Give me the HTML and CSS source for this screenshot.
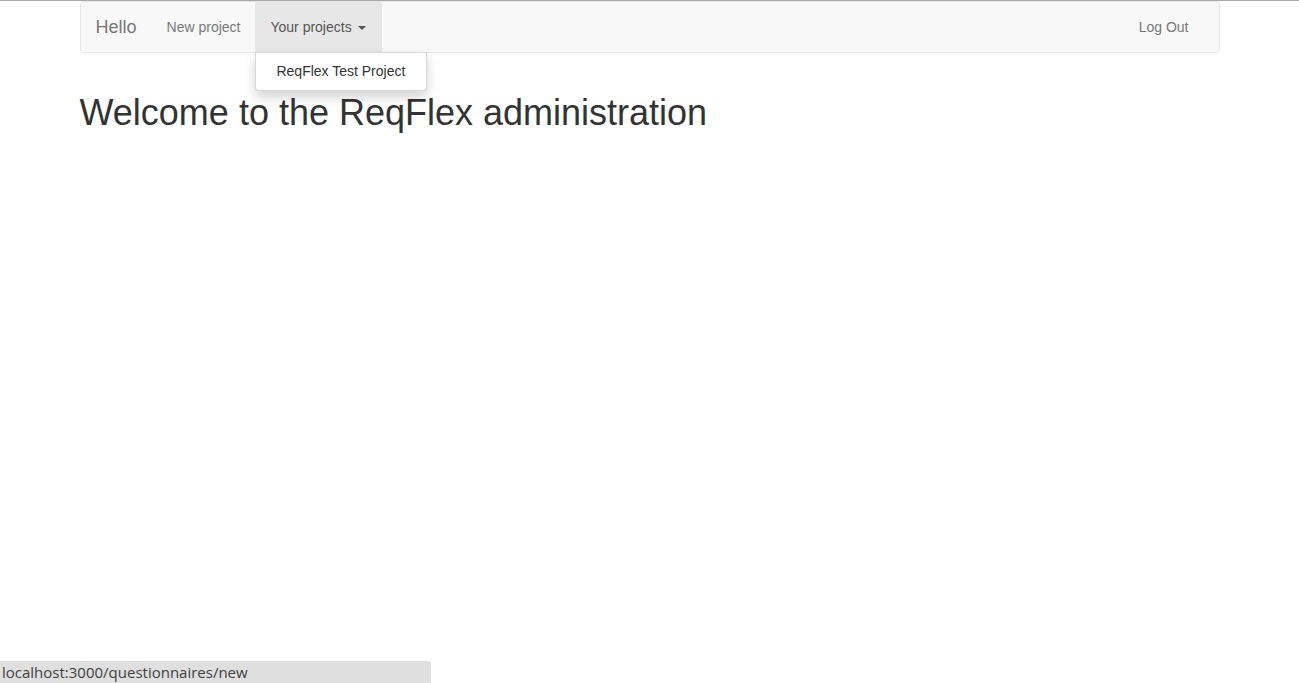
FILE: index.html
```html
<!DOCTYPE html>
<html>
<head>
<meta charset="utf-8">
<link rel="stylesheet" href="styles.css">
</head>
<body>
<div class="topline"></div>
<div class="container">
  <nav class="navbar">
    <a class="brand" href="#">Hello</a>
    <ul class="nav">
      <li><a href="#">New project</a></li>
      <li class="dropdown open">
        <a href="#">Your projects <span class="caret"></span></a>
        <ul class="dropdown-menu">
          <li><a href="#">ReqFlex Test Project</a></li>
        </ul>
      </li>
    </ul>
    <ul class="nav nav-right">
      <li><a href="#">Log Out</a></li>
    </ul>
  </nav>
  <h1>Welcome to the ReqFlex administration</h1>
</div>
<div class="status">localhost:3000/questionnaires/new</div>
</body>
</html>
```
FILE: styles.css
```css
html, body {
  margin: 0;
  padding: 0;
  height: 100%;
}
body {
  font-family: "Liberation Sans", Arial, sans-serif;
  font-size: 14px;
  line-height: 1.42857;
  color: #333;
  background: #fff;
}
a { text-decoration: none; }
.topline {
  height: 1px;
  background: #a8a8a8;
}
.container {
  width: 1140px;
  margin: 0 auto;
}
.navbar {
  display: flex;
  align-items: stretch;
  height: 50px;
  background: #f8f8f8;
  border: 1px solid #e7e7e7;
  border-radius: 4px;
  padding: 0 15px;
}
.brand {
  font-size: 18px;
  line-height: 20px;
  padding: 15px;
  margin-left: -15px;
  color: #777;
}
.nav {
  list-style: none;
  margin: 0;
  padding: 0;
  display: flex;
}
.nav > li { position: relative; }
.nav > li > a {
  display: block;
  padding: 15px;
  line-height: 20px;
  color: #777;
}
.nav-right { margin-left: auto; }
.dropdown.open > a {
  background: #e7e7e7;
  color: #555;
  padding-right: 16px;
}
.caret {
  display: inline-block;
  width: 0;
  height: 0;
  margin-left: 2px;
  vertical-align: middle;
  border-top: 4px solid;
  border-left: 4px solid transparent;
  border-right: 4px solid transparent;
}
.dropdown-menu {
  position: absolute;
  top: 100%;
  left: 0;
  min-width: 160px;
  list-style: none;
  margin: 0;
  padding: 6px 0 5px;
  background: #fff;
  border: 1px solid rgba(0,0,0,.15);
  border-radius: 0 0 4px 4px;
  box-shadow: 0 6px 12px rgba(0,0,0,.175);
  white-space: nowrap;
  z-index: 10;
}
.dropdown-menu a {
  display: block;
  padding: 3px 21px 3px 20px;
  color: #333;
}
h1 {
  font-size: 36px;
  font-weight: 500;
  line-height: 1.1;
  margin: 40px 0 10px;
  color: #333;
}
.status {
  position: fixed;
  left: 0;
  bottom: 0;
  width: 431px;
  height: 22px;
  padding-left: 2px;
  background: #dfdfdf;
  border-top-right-radius: 3px;
  box-sizing: border-box;
  font-family: "Open Sans", "DejaVu Sans", sans-serif;
  font-size: 15px;
  line-height: 22px;
  color: #404040;
}
```
